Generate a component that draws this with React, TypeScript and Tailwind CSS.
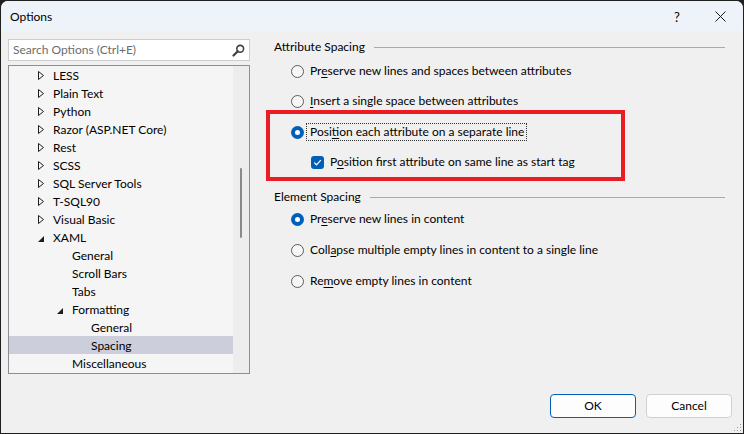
import React from 'react';

type TreeItem = {
  label: string;
  level: 1 | 2 | 3;
  kind: 'collapsed' | 'expanded' | 'leaf';
  selected?: boolean;
};

const treeItems: TreeItem[] = [
  { label: 'LESS', level: 1, kind: 'collapsed' },
  { label: 'Plain Text', level: 1, kind: 'collapsed' },
  { label: 'Python', level: 1, kind: 'collapsed' },
  { label: 'Razor (ASP.NET Core)', level: 1, kind: 'collapsed' },
  { label: 'Rest', level: 1, kind: 'collapsed' },
  { label: 'SCSS', level: 1, kind: 'collapsed' },
  { label: 'SQL Server Tools', level: 1, kind: 'collapsed' },
  { label: 'T-SQL90', level: 1, kind: 'collapsed' },
  { label: 'Visual Basic', level: 1, kind: 'collapsed' },
  { label: 'XAML', level: 1, kind: 'expanded' },
  { label: 'General', level: 2, kind: 'leaf' },
  { label: 'Scroll Bars', level: 2, kind: 'leaf' },
  { label: 'Tabs', level: 2, kind: 'leaf' },
  { label: 'Formatting', level: 2, kind: 'expanded' },
  { label: 'General', level: 3, kind: 'leaf' },
  { label: 'Spacing', level: 3, kind: 'leaf', selected: true },
  { label: 'Miscellaneous', level: 2, kind: 'leaf' },
];

const indent: Record<number, string> = {
  1: 'pl-[28px]',
  2: 'pl-[47px]',
  3: 'pl-[66px]',
};

const Key: React.FC<{ children: React.ReactNode }> = ({ children }) => (
  <span className="underline underline-offset-[2px] decoration-[1px]">{children}</span>
);

const Radio: React.FC<{ checked?: boolean }> = ({ checked }) =>
  checked ? (
    <span className="flex h-[13px] w-[13px] shrink-0 items-center justify-center rounded-full bg-[#005fb8]">
      <span className="h-[5px] w-[5px] rounded-full bg-white" />
    </span>
  ) : (
    <span className="h-[13px] w-[13px] shrink-0 rounded-full border border-[#5c5c5c] bg-[#f6f6f6]" />
  );

const GroupHeading: React.FC<{ title: string }> = ({ title }) => (
  <div className="flex h-[16px] items-center">
    <span>{title}</span>
    <span className="ml-[9px] h-px flex-1 bg-[#a9a9a9]" />
  </div>
);

const App: React.FC = () => {
  return (
    <div
      className="relative h-[434px] w-[744px] overflow-hidden bg-[#1f1f1f] p-px text-[12px] leading-[16px] text-black"
      style={{ fontFamily: '"Segoe UI", Lato, "Noto Sans", sans-serif' }}
    >
      <div className="flex h-full w-full flex-col overflow-hidden rounded-t-[7px] bg-[#f0f0f0]">
        {/* title bar */}
        <div className="flex h-[30px] shrink-0 items-center bg-[#eef3f9] pl-[9px] pt-px">
          <span className="flex-1">Options</span>
          <span className="w-[46px] pl-[6px] text-center text-[13px]">?</span>
          <span className="flex w-[46px] items-center justify-center">
            <svg width="11" height="11" viewBox="0 0 11 11">
              <path d="M0.5 0.5 L10.5 10.5 M10.5 0.5 L0.5 10.5" stroke="#1a1a1a" strokeWidth="1" />
            </svg>
          </span>
        </div>

        <div className="flex flex-1">
          {/* left: search + tree */}
          <div className="flex w-[249px] shrink-0 flex-col pl-[7px] pt-[8px]">
            <div className="flex h-[22px] items-center border border-[#cdcdcd] bg-white pl-[4px] pr-[4px]">
              <span className="flex-1 text-[#6d6d6d]">Search Options (Ctrl+E)</span>
              <svg width="13" height="13" viewBox="0 0 13 13">
                <circle cx="8.2" cy="4.8" r="3.4" fill="none" stroke="#404040" strokeWidth="1.6" />
                <path d="M5.8 7.2 L1.5 11.5" stroke="#404040" strokeWidth="2.2" strokeLinecap="round" />
              </svg>
            </div>
            <div className="mt-[4px] flex h-[309px] border border-[#8d8d95] bg-[#f5f5f5]">
              <div className="flex-1">
                {treeItems.map((item, i) => (
                  <div
                    key={i}
                    className={`flex h-[18px] items-center ${indent[item.level]} ${
                      item.selected ? 'bg-[#cccedb]' : ''
                    }`}
                  >
                    <span className="flex w-[16px] shrink-0 items-center pl-[1px]">
                      {item.kind === 'collapsed' && (
                        <svg width="6" height="9" viewBox="0 0 6 9">
                          <path d="M0.5 0.5 L5.5 4.5 L0.5 8.5 Z" fill="none" stroke="#1e1e1e" strokeWidth="1" />
                        </svg>
                      )}
                      {item.kind === 'expanded' && (
                        <svg width="6" height="6" viewBox="0 0 6 6" className="mt-[3px]">
                          <path d="M6 0 L6 6 L0 6 Z" fill="#1e1e1e" />
                        </svg>
                      )}
                    </span>
                    <span className="whitespace-nowrap pt-px">{item.label}</span>
                  </div>
                ))}
              </div>
              {/* scrollbar */}
              <div className="w-[16px] shrink-0 bg-[#ededed] pl-[7px] pt-[102px]">
                <div className="h-[70px] w-[2px] rounded-full bg-[#8a8a8a]" />
              </div>
            </div>
          </div>

          {/* right: settings */}
          <div className="flex flex-1 flex-col pl-[24px] pr-[18px] pt-[8px]">
            <GroupHeading title="Attribute Spacing" />
            <div className="mt-[8px] flex h-[16px] items-center pl-[17px]">
              <Radio />
              <span className="ml-[6px]">
                Pr<Key>e</Key>serve new lines and spaces between attributes
              </span>
            </div>
            <div className="mt-[14px] flex h-[16px] items-center pl-[17px]">
              <Radio />
              <span className="ml-[6px]">
                <Key>I</Key>nsert a single space between attributes
              </span>
            </div>
            <div className="mt-[15px] flex h-[16px] items-center pl-[17px]">
              <Radio checked />
              <span className="ml-[2px] border border-dotted border-[#333] pl-[3px] pr-[2px]">
                Posi<Key>t</Key>ion each attribute on a separate line
              </span>
            </div>
            <div className="mt-[14px] flex h-[16px] items-center pl-[37px]">
              <span className="flex h-[13px] w-[13px] shrink-0 items-center justify-center rounded-[3px] bg-[#005fb8]">
                <svg width="9" height="9" viewBox="0 0 9 9">
                  <path d="M1.2 4.6 L3.5 6.8 L7.8 2.2" fill="none" stroke="white" strokeWidth="1.2" />
                </svg>
              </span>
              <span className="ml-[6px]">
                P<Key>o</Key>sition first attribute on same line as start tag
              </span>
            </div>
            <div className="mt-[19px]">
              <GroupHeading title="Element Spacing" />
            </div>
            <div className="mt-[6px] flex h-[16px] items-center pl-[17px]">
              <Radio checked />
              <span className="ml-[6px]">
                Pr<Key>e</Key>serve new lines in content
              </span>
            </div>
            <div className="mt-[15px] flex h-[16px] items-center pl-[17px]">
              <Radio />
              <span className="ml-[6px]">
                Coll<Key>a</Key>pse multiple empty lines in content to a single line
              </span>
            </div>
            <div className="mt-[15px] flex h-[16px] items-center pl-[17px]">
              <Radio />
              <span className="ml-[6px]">
                Re<Key>m</Key>ove empty lines in content
              </span>
            </div>
          </div>
        </div>

        {/* buttons */}
        <div className="flex shrink-0 justify-end gap-[10px] pb-[15px] pr-[11px]">
          <button className="h-[24px] w-[86px] rounded-[4px] border border-[#005fb8] bg-[#fdfdfd]">OK</button>
          <button className="h-[24px] w-[86px] rounded-[4px] border border-[#d0d0d0] bg-[#fdfdfd]">Cancel</button>
        </div>
      </div>

      {/* resize grip */}
      <svg width="8" height="8" viewBox="0 0 8 8" className="absolute bottom-[2px] right-[2px]">
        <rect x="6" y="0" width="1" height="1" fill="#9a9a9a" />
        <rect x="3" y="3" width="1" height="1" fill="#9a9a9a" />
        <rect x="6" y="3" width="1" height="1" fill="#9a9a9a" />
        <rect x="0" y="6" width="1" height="1" fill="#9a9a9a" />
        <rect x="3" y="6" width="1" height="1" fill="#9a9a9a" />
        <rect x="6" y="6" width="1" height="1" fill="#9a9a9a" />
      </svg>

      {/* red highlight annotation */}
      <div className="pointer-events-none absolute left-[266px] top-[110px] h-[71px] w-[359px] border-4 border-[#ec1c24]" />
    </div>
  );
};

export default App;
